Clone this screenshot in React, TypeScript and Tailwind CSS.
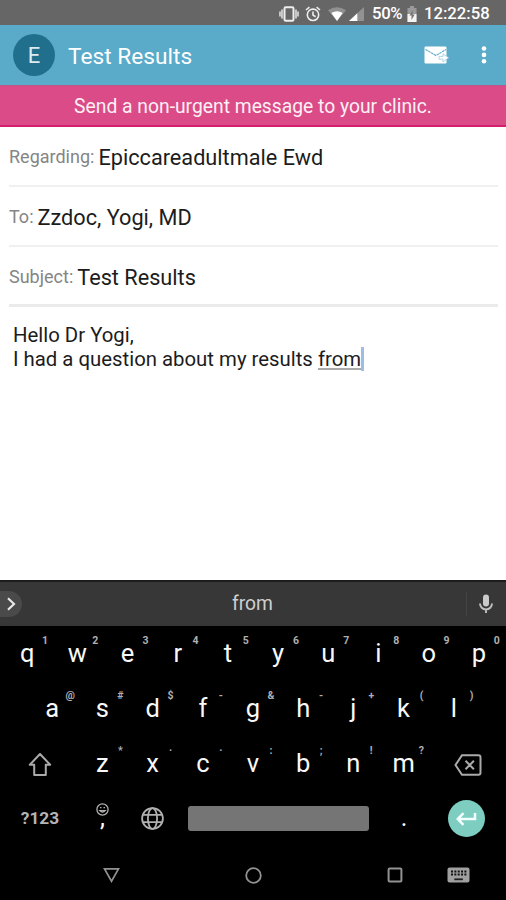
import React from "react";

type KeyDef = [letter: string, hint: string];

const row1: KeyDef[] = [["q", "1"], ["w", "2"], ["e", "3"], ["r", "4"], ["t", "5"], ["y", "6"], ["u", "7"], ["i", "8"], ["o", "9"], ["p", "0"]];
const row2: KeyDef[] = [["a", "@"], ["s", "#"], ["d", "$"], ["f", "-"], ["g", "&"], ["h", "-"], ["j", "+"], ["k", "("], ["l", ")"]];
const row3: KeyDef[] = [["z", "*"], ["x", "·"], ["c", "·"], ["v", ":"], ["b", ";"], ["n", "!"], ["m", "?"]];

function Key({ def }: { def: KeyDef }) {
  return (
    <div className="relative flex h-full w-[50.2px] items-center justify-center text-[25.5px] leading-none text-[#f8f8f8]">
      {def[0]}
      <span className="absolute left-[34px] top-[8.5px] w-[18px] text-center text-[10.5px] font-bold leading-[12px] text-[#b0b0b0]">{def[1]}</span>
    </div>
  );
}

function Field({ label, value, line }: { label: string; value: string; line: string }) {
  return (
    <div className={"ml-[9px] mr-[8px] flex h-[60px] leading-[26px] " + line}>
      <span className="pt-[17px] text-[18px] text-[#858585]">{label}</span>
      <span className="ml-1 pt-[18px] text-[21.7px] text-[#1c1c1c]">{value}</span>
    </div>
  );
}

function StatusBar() {
  return (
    <div className="flex h-[25px] items-center justify-end bg-[#666666] pr-[16px] pt-[2px] text-white">
      <svg width="20" height="16" viewBox="0 0 20 16" fill="none" stroke="#eee">
        <rect x="5.5" y="1.2" width="9" height="13.6" rx="1.2" strokeWidth="2" />
        <path d="M3 3.5v9M17 3.5v9" strokeWidth="1.4" />
        <path d="M1 5.5v5M19 5.5v5" strokeWidth="1.4" />
      </svg>
      <svg className="ml-[6px]" width="16" height="16" viewBox="0 0 16 16" fill="none" stroke="#eee" strokeWidth="1.6">
        <circle cx="8" cy="8.8" r="5.7" />
        <path d="M1 4l3.4-2.8M15 4l-3.4-2.8M8 5.5v3.6l2.6 1.6" />
      </svg>
      <svg className="ml-[7px]" width="18" height="14" viewBox="0 0 18 14">
        <path d="M0 3.2Q9-2.6 18 3.2L9 14z" fill="#909090" />
        <path d="M3.3 6Q9 2.3 14.7 6L9 14z" fill="#fff" />
      </svg>
      <svg className="ml-[3px]" width="15" height="14" viewBox="0 0 15 14">
        <path d="M0 14L15 0v14z" fill="#929292" />
        <path d="M0 14L8.3 6.2V14z" fill="#fff" />
      </svg>
      <span className="ml-[8px] w-[31px] whitespace-nowrap text-[16.7px] font-medium leading-[23px] tracking-[-0.3px]">50%</span>
      <svg className="ml-[4px]" width="10" height="16" viewBox="0 0 10 16">
        <path d="M3 0h4v2h2.5v14h-9V2H3z" fill="#999" />
        <path d="M.5 8h9v8h-9z" fill="#f4f4f4" />
        <path d="M5.8 4L2.5 9.5h2V14l3.2-5.5h-2z" fill="#777" />
      </svg>
      <span className="ml-[7px] w-[66px] whitespace-nowrap text-[16.7px] font-medium leading-[23px]">12:22:58</span>
    </div>
  );
}

export default function App() {
  return (
    <div className="flex h-[900px] w-[506px] flex-col overflow-hidden bg-white font-['Roboto',sans-serif]">
      <StatusBar />

      <header className="flex h-[60px] items-center bg-[#5aaac9] pl-[13px] pr-[19px] text-white">
        <div className="flex h-[42px] w-[42px] items-center justify-center rounded-full bg-[#20708d] text-[22px] text-[#dcebf0]">E</div>
        <h1 className="ml-[13px] pt-[3px] text-[22.7px] leading-[30px]">Test Results</h1>
        <svg className="ml-auto" width="26" height="18" viewBox="0 0 26 18">
          <rect x="0.5" y="0.5" width="22" height="17" rx="1.2" fill="#fff" />
          <path d="M1.5 3.5l10.5 6L22 3.5" fill="none" stroke="#5aaac9" strokeWidth="1.1" strokeDasharray="2.6 .6" />
          <path d="M15 10.4h4V7.8l5.8 4-5.8 4v-2.6h-4z" fill="#fff" stroke="#8fc5da" strokeWidth=".7" />
        </svg>
        <svg className="ml-[31px]" width="6" height="18" viewBox="0 0 6 18" fill="#fff">
          <circle cx="3" cy="2.5" r="2.3" />
          <circle cx="3" cy="8.9" r="2.3" />
          <circle cx="3" cy="15.3" r="2.3" />
        </svg>
      </header>

      <div className="flex h-[42px] items-center justify-center border-b-2 border-t border-b-[#d41e6e] border-t-[#b9568a] bg-[#da4b87] pt-[3px] text-[19.3px] text-[#fdf0f5]">
        <span className="whitespace-nowrap">Send a non-urgent message to your clinic.</span>
      </div>

      <Field label="Regarding:" value="Epiccareadultmale Ewd" line="border-b-2 border-[#f0f0f0]" />
      <Field label="To:" value="Zzdoc, Yogi, MD" line="border-b-2 border-[#f0f0f0]" />
      <Field label="Subject:" value="Test Results" line="border-b-3 border-[#ebebeb]" />

      <div className="flex-1 pl-[13px] pt-[16px] text-[20.35px] leading-[24px] text-[#1c1c1c]">
        <p>Hello Dr Yogi,</p>
        <p className="flex whitespace-pre">
          I had a question about my results <span className="underline decoration-[#aaa] decoration-2 underline-offset-2">from</span>
          <span className="h-[24px] w-[3px] bg-[#9dbde6]" />
        </p>
      </div>

      <div className="flex h-[46px] items-center border-t-2 border-[#1c1c1c] bg-[#373737]">
        <div className="flex h-[26px] w-[22px] items-center rounded-r-full bg-[#4a4a4a] pl-[7px]">
          <svg width="9" height="14" viewBox="0 0 9 14" fill="none" stroke="#e8e8e8" strokeWidth="2.2"><path d="M1 1.2L7 7l-6 5.8" /></svg>
        </div>
        <div className="ml-[38px] flex-1 pt-px text-center text-[19.3px] text-[#cfcfcf]">from</div>
        <div className="ml-[21px] mr-px flex h-[24px] w-[39px] items-center justify-center border-l border-[#444]">
          <svg width="14" height="20" viewBox="0 0 14 20" fill="none">
            <rect x="4" y="0.5" width="6" height="12" rx="3" fill="#cacaca" />
            <path d="M1 9.5a6 6 0 0012 0M7 15.5V19" stroke="#c0c0c0" strokeWidth="1.9" />
          </svg>
        </div>
      </div>

      <div className="flex h-[274px] flex-col bg-black">
        <div className="flex h-[55px] justify-center">{row1.map((k) => <Key key={k[0]} def={k} />)}</div>
        <div className="flex h-[55px] justify-center">{row2.map((k) => <Key key={k[0]} def={k} />)}</div>
        <div className="flex h-[55px] items-center justify-center">
          <div className="flex w-[75.3px] justify-center">
            <svg width="24" height="24" viewBox="0 0 24 24" fill="none" stroke="#aaa" strokeWidth="2"><path d="M12 2L1.8 12.8h4.4V23h11.6V12.8h4.4z" strokeLinejoin="round" /></svg>
          </div>
          {row3.map((k) => <Key key={k[0]} def={k} />)}
          <div className="flex w-[75.3px] justify-center pl-[3px] pt-[2px]">
            <svg width="28" height="22" viewBox="0 0 28 22" fill="none" stroke="#aaa" strokeWidth="2"><path d="M8 1.2h16.5a2 2 0 012 2v15.6a2 2 0 01-2 2H8L1.5 11zM11.5 6.8l8.4 8.4M19.9 6.8l-8.4 8.4" /></svg>
          </div>
        </div>
        <div className="flex h-[55px] items-center">
          <div className="w-[80px] text-center text-[17.3px] font-bold text-[#b4b4b4]">?123</div>
          <div className="flex w-[45px] flex-col items-center pt-[2px]">
            <svg width="13" height="13" viewBox="0 0 13 13" fill="none" stroke="#b0b0b0" strokeWidth="1.3"><circle cx="6.5" cy="6.5" r="5.6" /><path d="M4 4.7h1.5M7.5 4.7H9M3.8 7.6q2.7 3 5.4 0z" /></svg>
            <span className="h-[20px] text-[25px] leading-[4px] text-white">,</span>
          </div>
          <svg className="ml-[16px]" width="23" height="23" viewBox="0 0 23 23" fill="none" stroke="#b0b0b0" strokeWidth="1.8"><circle cx="11.5" cy="11.5" r="10.4" /><ellipse cx="11.5" cy="11.5" rx="4.6" ry="10.4" /><path d="M2 7.8h19M2 15.2h19" /></svg>
          <div className="ml-[24px] h-[25px] w-[181px] rounded-[3px] bg-[#757575]" />
          <div className="w-[70px] pb-[3px] text-center text-[25px] leading-none text-white">.</div>
          <div className="ml-[9px] flex h-[37px] w-[37px] items-center justify-center rounded-full bg-[#7dcdc0]">
            <svg width="21" height="14" viewBox="0 0 21 14" fill="none" stroke="#f4ffff" strokeWidth="2.5"><path d="M19 1v6H2M7.5 1.2L1.8 7l5.7 5.8" /></svg>
          </div>
        </div>
        <nav className="flex flex-1 items-center pt-[4px]">
          <svg className="ml-[103px]" width="17" height="16" viewBox="0 0 17 16" fill="none" stroke="#929292" strokeWidth="1.7"><path d="M1.5 1.8h14l-7 12.4z" /></svg>
          <svg className="ml-[125px]" width="17" height="17" viewBox="0 0 17 17" fill="none" stroke="#929292" strokeWidth="1.8"><circle cx="8.5" cy="8.5" r="7.3" /></svg>
          <svg className="ml-[125px]" width="16" height="16" viewBox="0 0 16 16" fill="none" stroke="#929292" strokeWidth="2"><rect x="1.6" y="1.6" width="12.8" height="12.8" rx="1" /></svg>
          <svg className="ml-[44px]" width="23" height="16" viewBox="0 0 23 16">
            <rect x="0.5" y="0.5" width="22" height="15" rx="2" fill="#a0a0a0" />
            <path d="M4 4.4h15.5M4 7.6h15.5" stroke="#111" strokeWidth="2" strokeDasharray="2 1.35" />
            <path d="M7.3 12.3h8.6" stroke="#222" strokeWidth="1.8" />
          </svg>
        </nav>
      </div>
    </div>
  );
}
